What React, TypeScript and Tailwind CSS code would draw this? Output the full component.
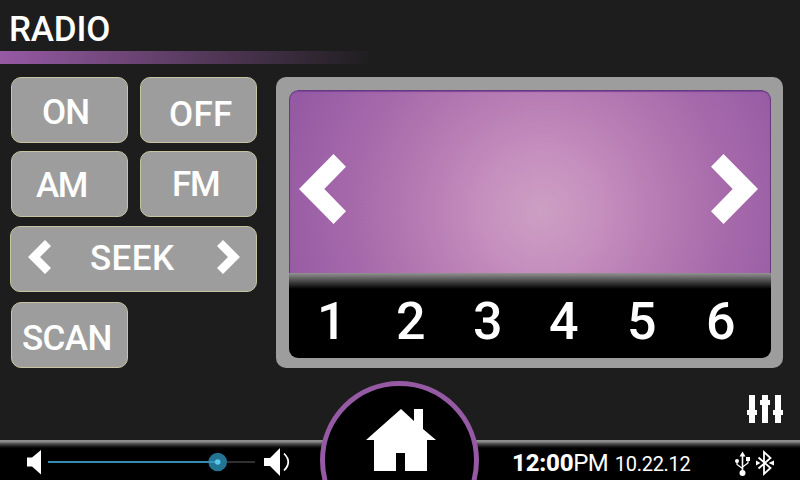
import type { ReactNode } from "react";

const BUTTON =
  "flex items-start h-[66px] rounded-[10px] border border-[#c6c5a0] bg-[#9d9d9d] text-left text-[35px] leading-[34px] whitespace-nowrap";

function PadButton({ className, children }: { className: string; children: ReactNode }) {
  return <button className={`${BUTTON} ${className}`}>{children}</button>;
}

function Chevron({ className, points, box }: { className: string; points: string; box: string }) {
  return (
    <svg className={className} viewBox={box} fill="white">
      <polygon points={points} />
    </svg>
  );
}

function Controls() {
  return (
    <div className="flex w-[276px] flex-col pl-[10px]">
      <div className="flex gap-3 pl-px">
        <PadButton className="w-[117px] pt-[18px] pl-[30px] font-medium tracking-[-0.9px]">ON</PadButton>
        <PadButton className="w-[117px] pt-[20px] pl-[28px] font-medium tracking-[0.3px]">OFF</PadButton>
      </div>
      <div className="mt-2 flex gap-3 pl-px">
        <PadButton className="w-[117px] pt-[17px] pl-[24px] font-medium tracking-[-1.5px]">AM</PadButton>
        <PadButton className="w-[117px] pt-[16px] pl-[31px] font-medium tracking-[-1.4px]">FM</PadButton>
      </div>
      <button className={`${BUTTON} mt-[9px] w-[247px]`}>
        <span className="flex h-full items-start pt-[13px] pl-[17px]">
          <Chevron className="h-[34px] w-[23px]" box="0 0 23 34" points="0,17 17,0 23,6 12,17 23,28 17,34" />
          <span className="mt-[2px] ml-[39px] w-[127px] font-medium tracking-[0.4px]">SEEK</span>
          <Chevron className="h-[34px] w-[23px]" box="0 0 23 34" points="23,17 6,0 0,6 11,17 0,28 6,34" />
        </span>
      </button>
      <div className="mt-[10px] pl-px">
        <PadButton className="w-[117px] pt-[19px] pl-[10px] font-medium tracking-[-0.6px]">SCAN</PadButton>
      </div>
    </div>
  );
}

function Display() {
  return (
    <div className="h-[291px] w-[507px] rounded-[10px] bg-[#9d9d9d] pt-[13px] pl-[13px]">
      <div className="flex h-[268px] w-[482px] flex-col overflow-hidden rounded-[9px]">
        <div className="flex h-[183px] items-start justify-between rounded-t-[9px] border-x border-t border-[#693882] bg-[radial-gradient(circle_265px_at_251px_120px,#cd9fc4_0%,#c58fbe_22%,#b67bb3_46%,#a66aab_70%,#965aa4_100%)] pt-[63px] pr-[12px] pl-[9px] shadow-[inset_0_1px_1px_#7b4895]">
          <Chevron className="h-[70px] w-[47px]" box="0 0 47 70" points="0,35 34.5,0 47,12.7 25.3,35 47,57.3 34.5,70" />
          <Chevron className="h-[70px] w-[47px]" box="0 0 47 70" points="47,35 12.5,0 0,12.7 21.7,35 0,57.3 12.5,70" />
        </div>
        <div className="flex h-[85px] bg-[linear-gradient(#929292_0px,#777_3px,#000_16px)] pt-[23px] pl-[28px] text-[52px] leading-[52px] font-medium">
          <span className="w-[79px]">1</span>
          <span className="w-[77px]">2</span>
          <span className="w-[76px]">3</span>
          <span className="w-[78px]">4</span>
          <span className="w-[79px]">5</span>
          <span>6</span>
        </div>
      </div>
    </div>
  );
}

function Volume() {
  return (
    <svg className="h-[36px] w-[300px]" viewBox="0 444 300 36" fill="white">
      <path d="M27 457.5h5l9-7.5v24.500l-9-8h-5z" />
      <rect x="218" y="461" width="37" height="2" fill="#303030" />
      <rect x="48" y="461" width="170" height="2" fill="#328eae" />
      <circle cx="217.700" cy="462" r="9.300" fill="#247594" />
      <rect x="208.500" y="461" width="9" height="2" fill="#3595b8" />
      <circle cx="217.700" cy="462" r="2.800" fill="#56c7ed" />
      <path d="M264 458h6l10-10v28l-10-10h-6z" />
      <path d="M284 453.500q8.500 8.500 0 17" fill="none" stroke="white" strokeWidth="1.700" />
    </svg>
  );
}

function StatusIcons() {
  return (
    <svg className="h-[32px] w-[44px]" viewBox="732 448 44 32" fill="none" stroke="white">
      <path d="M742.500 455v17" strokeWidth="1.600" />
      <path d="M739.500 456.500l3-5 3 5z" fill="white" stroke="none" />
      <path d="M737 461v3.500l5.500 4M748 459v4l-5.500 4" strokeWidth="1.200" />
      <circle cx="737" cy="461" r="2" fill="white" stroke="none" />
      <rect x="746" y="457" width="4" height="4" fill="white" stroke="none" />
      <circle cx="742.500" cy="473" r="3" fill="white" stroke="none" />
      <path d="M758.500 457.500l12 10.500-6.500 6v-22l6.500 6-12 10.500" strokeWidth="1.800" />
      <path d="M756 460.500l4.500 2.500-4.500 2.500zM774 460.500l-5.500 2.500 5.500 2.500z" fill="white" stroke="none" />
    </svg>
  );
}

function HomeButton() {
  return (
    <button className="absolute top-[-59px] left-[320px] flex h-[159px] w-[159px] items-start justify-center rounded-full border-[5px] border-[#965aa4] bg-black pt-[23px] pl-[2px]" aria-label="Home">
      <svg className="h-[62px] w-[70px]" viewBox="0 0 70 62" fill="white">
        <path d="M35 0L48 12V0h9v20l13 11h-9v31H39V44h-9v18H8V31H0z" />
      </svg>
    </button>
  );
}

export default function App() {
  return (
    <div className="relative flex h-[480px] w-[800px] flex-col overflow-hidden bg-[#1d1d1d] font-[Roboto,sans-serif] text-white">
      <header className="h-[77px] shrink-0">
        <h1 className="h-[51px] pt-[13px] pl-[9px] text-[35px] leading-[34px] font-medium tracking-[-0.2px]">RADIO</h1>
        <div className="h-[13px] w-[375px] bg-[linear-gradient(90deg,#965aa4,#1d1d1d)]" />
      </header>
      <main className="flex h-[291px] shrink-0">
        <Controls />
        <Display />
      </main>
      <div className="flex h-[72px] shrink-0 justify-end pt-[27px] pr-[17px]">
        <svg className="h-[28px] w-[36px]" viewBox="0 0 36 28" fill="white">
          <path d="M2 0h6v28H2zM15 0h6v28h-6zM28 0h6v28h-6zM0 15h10v5H0zM13 5h10v5H13zM26 15h10v5H26z" />
        </svg>
      </div>
      <footer className="relative flex h-[40px] shrink-0 bg-[linear-gradient(#909090_0px,#888_2px,#606060_3px,#353535_5px,#000_8px)] pt-[4px]">
        <Volume />
        <HomeButton />
        <div className="ml-[212px] flex w-[220px] items-baseline whitespace-nowrap">
          <span className="text-[24px] leading-[38px] font-extrabold tracking-[-0.2px]">12:00</span>
          <span className="text-[24px] leading-[38px] font-normal tracking-[-0.8px]">PM</span>
          <span className="ml-[7px] text-[20px] leading-[38px] font-normal tracking-[-0.3px]">10.22.12</span>
        </div>
        <div className="pt-[4px]">
          <StatusIcons />
        </div>
      </footer>
    </div>
  );
}
